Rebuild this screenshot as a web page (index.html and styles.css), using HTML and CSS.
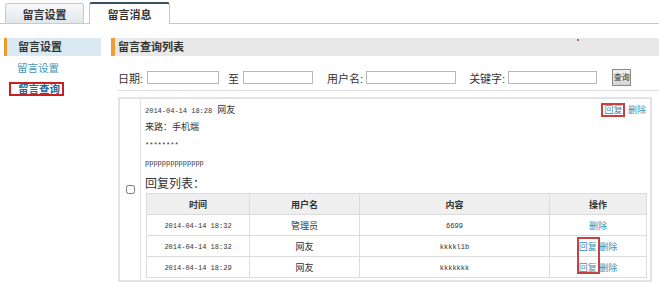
FILE: index.html
```html
<!DOCTYPE html>
<html lang="zh-CN">
<head>
    <meta charset="UTF-8">
    <meta name="viewport" content="width=device-width, initial-scale=1.0">
    <title>留言查询</title>
    <link rel="stylesheet" href="styles.css">
</head>
<body>
    <div class="tabs">
        <a class="tab" href="#">留言设置</a>
        <a class="tab active" href="#">留言消息</a>
    </div>
    <div class="page">
        <div class="side">
            <div class="side-title">留言设置</div>
            <div class="side-links">
                <a class="side-link" href="#">留言设置</a>
                <a class="side-link current" href="#">留言查询</a>
            </div>
        </div>
        <div class="main">
            <div class="main-title">留言查询列表<span class="dot"></span></div>
            <form class="search">
                <label>日期:</label>
                <input class="field f-date" type="text">
                <label class="gap-9">至</label>
                <input class="field f-date2" type="text">
                <label class="gap-14">用户名:</label>
                <input class="field f-user" type="text">
                <label class="gap-13">关键字:</label>
                <input class="field f-key" type="text">
                <button class="search-btn" type="button">查询</button>
            </form>
            <div class="msg">
                <div class="msg-check"><input type="checkbox"></div>
                <div class="msg-body">
                    <div class="msg-head">
                        <div><span class="num">2014-04-14 18:28</span><span class="who">网友</span></div>
                        <div class="ops">
                            <a class="link marked" href="#">回复</a>
                            <a class="link" href="#">删除</a>
                        </div>
                    </div>
                    <p class="msg-line">来路：手机端</p>
                    <p class="msg-line"><span class="num">********</span></p>
                    <p class="msg-line"><span class="num">pppppppppppppp</span></p>
                    <div class="reply-title">回复列表：</div>
                    <div class="replies">
                        <table>
                            <colgroup>
                                <col class="c-time">
                                <col class="c-user">
                                <col class="c-text">
                                <col class="c-ops">
                            </colgroup>
                            <tr>
                                <th>时间</th>
                                <th>用户名</th>
                                <th>内容</th>
                                <th>操作</th>
                            </tr>
                            <tr>
                                <td><span class="num">2014-04-14 18:32</span></td>
                                <td>管理员</td>
                                <td><span class="num">6699</span></td>
                                <td><a class="link" href="#">删除</a></td>
                            </tr>
                            <tr>
                                <td><span class="num">2014-04-14 18:32</span></td>
                                <td>网友</td>
                                <td><span class="num">kkkkl1b</span></td>
                                <td><a class="link" href="#">回复</a> <a class="link" href="#">删除</a></td>
                            </tr>
                            <tr>
                                <td><span class="num">2014-04-14 18:29</span></td>
                                <td>网友</td>
                                <td><span class="num">kkkkkkk</span></td>
                                <td><a class="link" href="#">回复</a> <a class="link" href="#">删除</a></td>
                            </tr>
                        </table>
                        <div class="mark"></div>
                    </div>
                </div>
            </div>
        </div>
    </div>
</body>
</html>
```

FILE: styles.css
```css
* {
    box-sizing: border-box;
}
body {
    margin: 0;
    background-color: #fff;
    color: #333;
    font-family: "Liberation Sans", "Noto Sans CJK SC", sans-serif;
    font-size: 11px;
}
a {
    text-decoration: none;
}

/* top tabs */
.tabs {
    display: flex;
    align-items: flex-end;
    gap: 5px;
    height: 24px;
    padding-left: 5px;
    border-bottom: 1px solid #c9c9c9;
}
.tab {
    width: 79px;
    height: 20px;
    display: flex;
    align-items: center;
    justify-content: center;
    border: 1px solid #c3cbd2;
    border-bottom: none;
    border-radius: 3px 3px 0 0;
    background: linear-gradient(#f7f9fa, #e1e7eb);
    color: #333;
    font-weight: bold;
}
.tab.active {
    width: 81px;
    height: 22px;
    margin-bottom: -1px;
    border-top: 2px solid #37505f;
    background: #fff;
}

.page {
    display: flex;
    padding: 14px 0 0 4px;
}

/* left menu */
.side {
    width: 97px;
    flex: none;
    margin-right: 10px;
}
.side-title {
    height: 18px;
    line-height: 18px;
    padding-left: 11px;
    border-left: 3px solid #f19a2c;
    background-color: #dae9f2;
    font-weight: bold;
}
.side-links {
    display: flex;
    flex-direction: column;
    align-items: flex-start;
    padding-top: 6px;
}
.side-link {
    margin-left: 13px;
    color: #4795bd;
    font-size: 10.5px;
    line-height: 12px;
}
.side-link.current {
    margin: 8px 0 0 5px;
    padding: 0 2px 0 7px;
    border: 2px solid #cc1f1f;
    line-height: 10px;
    color: #1e6a9c;
    font-weight: bold;
}

/* main */
.main {
    flex: 1;
}
.main-title {
    position: relative;
    height: 18px;
    line-height: 18px;
    padding-left: 3px;
    border-left: 4px solid #f29b32;
    background-color: #e8e8e8;
    font-weight: bold;
}
.main-title .dot {
    position: absolute;
    left: 462px;
    top: 1px;
    width: 2px;
    height: 2px;
    border-radius: 50%;
    background-color: #d22;
}

.search {
    display: flex;
    align-items: center;
    height: 22px;
    margin: 13px 0 0 7px;
    padding-bottom: 4px;
    border-bottom: 1px solid #dedede;
}
.field {
    height: 13px;
    margin-left: 4px;
    padding: 0;
    border: 1px solid #b8b8b8;
    background: #fff;
}
.f-date { width: 72px; }
.f-date2 { width: 70px; }
.f-user { width: 90px; margin-left: 3px; }
.f-key { width: 89px; margin-left: 3px; }
.gap-9 { margin-left: 9px; }
.gap-14 { margin-left: 14px; }
.gap-13 { margin-left: 13px; }
.search-btn {
    width: 19px;
    height: 17px;
    margin-left: 15px;
    padding: 0;
    border: 1px solid #8a8a8a;
    background: linear-gradient(#f0f0f0, #d6d6d6);
    color: #333;
    font-family: "Liberation Sans", "Noto Sans CJK SC", sans-serif;
    font-size: 8px;
    line-height: 15px;
    white-space: nowrap;
    overflow: hidden;
}

/* message block */
.msg {
    display: flex;
    width: 534px;
    margin: 6px 0 0 7px;
    border: 2px solid #e3e3e3;
}
.msg-check {
    width: 21px;
    flex: none;
    display: flex;
    align-items: center;
    justify-content: center;
    border-right: 1px solid #e3e3e3;
}
.msg-check input {
    width: 9px;
    height: 9px;
    margin: 0;
}
.msg-body {
    flex: 1;
    padding: 0 4px 2px 4px;
}
.msg-head {
    display: flex;
    justify-content: space-between;
    align-items: center;
    height: 20px;
    font-size: 9px;
}
.who {
    margin-left: 5px;
}
.num {
    font-family: "Liberation Mono", monospace;
    font-size: 7px;
}
.ops {
    margin-right: 1px;
}
.link {
    color: #3a8fb5;
    font-size: 9px;
}
.link.marked {
    padding: 0 1px;
    border: 2px solid #c94040;
}
.msg-line {
    margin: 0;
    line-height: 17px;
    font-size: 9px;
}
.reply-title {
    margin-top: 4px;
    font-size: 12px;
    line-height: 16px;
}

.replies {
    position: relative;
    margin: 1px 0 0 1px;
}
table {
    width: 500px;
    border-collapse: collapse;
    table-layout: fixed;
    font-size: 9px;
    text-align: center;
}
.c-time { width: 103px; }
.c-user { width: 110px; }
.c-text { width: 190px; }
.c-ops { width: 97px; }
th, td {
    height: 21px;
    padding: 0;
    border: 1px solid #dcdcdc;
}
th {
    background-color: #efefef;
    font-weight: bold;
}
.mark {
    position: absolute;
    left: 431px;
    top: 44px;
    width: 23px;
    height: 37px;
    border: 2px solid #c94040;
}
```
